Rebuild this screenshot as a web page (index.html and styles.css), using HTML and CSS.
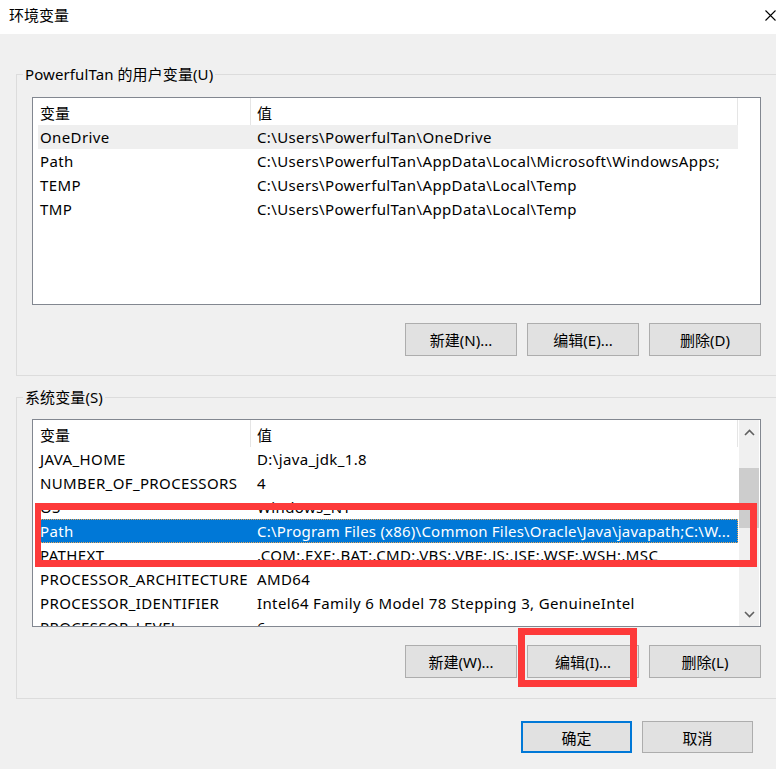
FILE: index.html
```html
<!DOCTYPE html>
<html lang="zh-CN">
<head>
<meta charset="utf-8">
<title>环境变量</title>
<link rel="stylesheet" href="styles.css">
</head>
<body>
<div class="titlebar">
  <span class="title">环境变量</span>
  <svg class="close" width="11" height="11" viewBox="0 0 11 11"><path d="M0.5 0.5 L10.5 10.5 M10.5 0.5 L0.5 10.5" stroke="#000" stroke-width="1.1" fill="none"/></svg>
</div>

<fieldset class="group group-user">
  <legend>PowerfulTan 的用户变量(U)</legend>
  <div class="group-body">
    <div class="listview">
      <div class="lv-rows">
        <div class="lv-header"><div class="hc hc1">变量</div><div class="hc hc2">值</div></div>
        <div class="row hover"><div class="c1">OneDrive</div><div class="c2">C:\Users\PowerfulTan\OneDrive</div></div>
        <div class="row"><div class="c1">Path</div><div class="c2">C:\Users\PowerfulTan\AppData\Local\Microsoft\WindowsApps;</div></div>
        <div class="row"><div class="c1">TEMP</div><div class="c2">C:\Users\PowerfulTan\AppData\Local\Temp</div></div>
        <div class="row"><div class="c1">TMP</div><div class="c2">C:\Users\PowerfulTan\AppData\Local\Temp</div></div>
      </div>
    </div>
    <div class="btnrow">
      <button class="btn">新建(N)...</button>
      <button class="btn">编辑(E)...</button>
      <button class="btn">删除(D)</button>
    </div>
  </div>
</fieldset>

<fieldset class="group group-sys">
  <legend>系统变量(S)</legend>
  <div class="group-body">
    <div class="listview">
      <div class="lv-rows">
        <div class="lv-header"><div class="hc hc1">变量</div><div class="hc hc2">值</div></div>
        <div class="row"><div class="c1">JAVA_HOME</div><div class="c2">D:\java_jdk_1.8</div></div>
        <div class="row"><div class="c1">NUMBER_OF_PROCESSORS</div><div class="c2">4</div></div>
        <div class="row"><div class="c1">OS</div><div class="c2">Windows_NT</div></div>
        <div class="row selected"><div class="c1">Path</div><div class="c2 tight">C:\Program Files (x86)\Common Files\Oracle\Java\javapath;C:\W...</div></div>
        <div class="row"><div class="c1">PATHEXT</div><div class="c2">.COM;.EXE;.BAT;.CMD;.VBS;.VBE;.JS;.JSE;.WSF;.WSH;.MSC</div></div>
        <div class="row"><div class="c1">PROCESSOR_ARCHITECTURE</div><div class="c2">AMD64</div></div>
        <div class="row"><div class="c1">PROCESSOR_IDENTIFIER</div><div class="c2">Intel64 Family 6 Model 78 Stepping 3, GenuineIntel</div></div>
        <div class="row"><div class="c1">PROCESSOR_LEVEL</div><div class="c2">6</div></div>
      </div>
      <div class="scrollbar">
        <div class="sb-btn"><svg width="11" height="7" viewBox="0 0 11 7"><path d="M1 6 L5.5 1.5 L10 6" stroke="#606060" stroke-width="1.6" fill="none"/></svg></div>
        <div class="sb-track"><div class="sb-thumb"></div></div>
        <div class="sb-btn"><svg width="11" height="7" viewBox="0 0 11 7"><path d="M1 1 L5.5 5.5 L10 1" stroke="#606060" stroke-width="1.6" fill="none"/></svg></div>
      </div>
    </div>
    <div class="btnrow">
      <button class="btn">新建(W)...</button>
      <button class="btn">编辑(I)...</button>
      <button class="btn">删除(L)</button>
    </div>
  </div>
</fieldset>

<div class="footer">
  <button class="btn btn-default">确定</button>
  <button class="btn">取消</button>
</div>

<div class="mark mark-row"></div>
<div class="mark mark-btn"></div>
</body>
</html>
```

FILE: styles.css
```css
html, body {
  margin: 0;
  padding: 0;
}
body {
  width: 776px;
  height: 769px;
  overflow: hidden;
  position: relative;
  background: #f0f0f0;
  font-family: "Noto Sans", "Noto Sans CJK SC", sans-serif;
  font-size: 15px;
  color: #000;
}
.titlebar {
  height: 34px;
  background: #fff;
  display: flex;
  align-items: flex-start;
  justify-content: space-between;
  box-sizing: border-box;
  padding: 5px 0 0 9px;
}
.title {
  line-height: 20px;
}
.close {
  margin-top: 5px;
  margin-right: 0;
}
.group {
  margin: 30px 0 0 16px;
  width: 800px;
  border: 1px solid #dcdcdc;
  border-right: none;
  padding: 13px 0 19px 6px;
  box-sizing: border-box;
  min-width: 0;
}
.group-sys {
  margin-top: 11px;
  padding: 12px 0 20px 6px;
}
.group legend {
  padding: 0 2px;
  line-height: 20px;
  margin: 0;
  letter-spacing: 0.1px;
}
.group-body {
  margin-left: 9px;
  width: 729px;
}
.listview {
  height: 208px;
  box-sizing: border-box;
  border: 1px solid #828790;
  background: #fff;
  display: flex;
  overflow: hidden;
}
.lv-rows {
  width: 700px;
  margin-left: 5px;
  overflow: hidden;
}
.lv-header {
  display: flex;
  height: 27px;
}
.hc {
  box-sizing: border-box;
  padding-top: 3px;
  line-height: 24px;
  border-right: 1px solid #e5e5e5;
}
.hc1 {
  width: 213px;
  padding-left: 2px;
}
.hc2 {
  width: 487px;
  padding-left: 6px;
}
.row {
  display: flex;
  height: 24px;
  line-height: 24px;
  white-space: nowrap;
  letter-spacing: 0.37px;
}
.row.hover {
  background: #efefef;
}
.row.selected {
  background: #0078d7;
  color: #fff;
  outline: 1px dotted #e9a657;
  outline-offset: -1px;
}
.c1 {
  width: 217px;
  padding-left: 2px;
  box-sizing: border-box;
  overflow: hidden;
}
.c2 {
  flex: 1;
  padding-left: 2px;
  overflow: hidden;
}
.c2.tight {
  letter-spacing: 0.22px;
}
.scrollbar {
  width: 20px;
  margin-left: 1px;
  background: #f0f0f0;
  display: flex;
  flex-direction: column;
}
.sb-btn {
  height: 24px;
  display: flex;
  align-items: center;
  justify-content: center;
}
.sb-track {
  flex: 1;
}
.sb-thumb {
  margin-top: 24px;
  height: 60px;
  background: #cdcdcd;
}
.btnrow {
  display: flex;
  justify-content: flex-end;
  gap: 10px;
  margin-top: 18px;
}
.btn {
  width: 112px;
  height: 33px;
  box-sizing: border-box;
  background: #e1e1e1;
  border: 1px solid #adadad;
  font-family: inherit;
  font-size: 15px;
  color: #000;
  padding: 0;
  margin: 0;
}
.footer {
  display: flex;
  justify-content: flex-end;
  gap: 10px;
  margin-top: 22px;
  padding-right: 23px;
}
.footer .btn {
  width: 111px;
  height: 32px;
}
.btn-default {
  border: 2px solid #0078d7;
}
.mark {
  position: absolute;
  box-sizing: border-box;
  border: 7px solid #fd3a3a;
}
.mark-row {
  left: 35px;
  top: 503px;
  width: 722px;
  height: 64px;
  border-left-width: 6px;
}
.mark-btn {
  left: 518px;
  top: 628px;
  width: 119px;
  height: 59px;
}
```
